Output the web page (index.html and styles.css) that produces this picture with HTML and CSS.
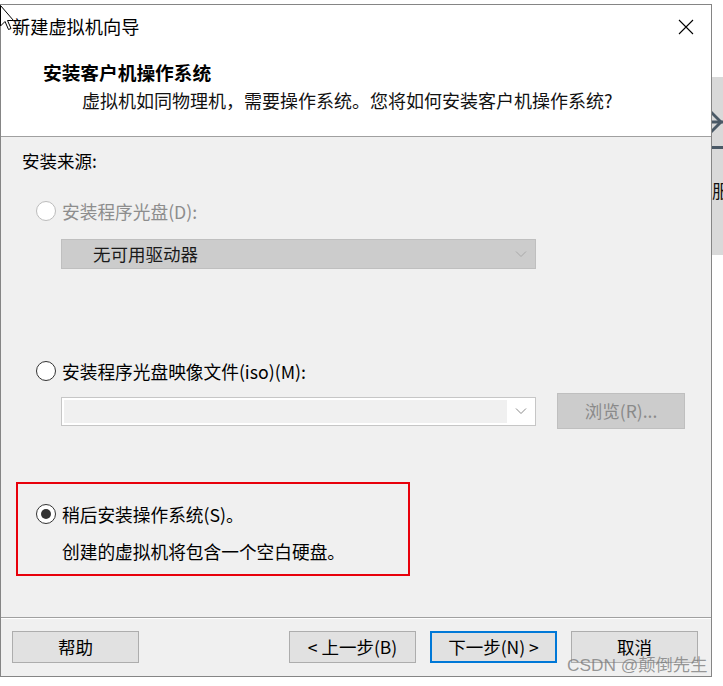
FILE: index.html
```html
<!DOCTYPE html>
<html lang="zh-CN">
<head>
<meta charset="utf-8">
<title>新建虚拟机向导</title>
<link rel="stylesheet" href="styles.css">
</head>
<body>
<div class="screen">
  <div class="window">
    <div class="titlebar">
      <span class="title">新建虚拟机向导</span>
      <svg class="close" width="16" height="16" viewBox="0 0 16 16"><path d="M1 1 L15 15 M15 1 L1 15" stroke="#000" stroke-width="1.1" fill="none"/></svg>
    </div>
    <div class="header">
      <div class="h-title">安装客户机操作系统</div>
      <div class="h-sub">虚拟机如同物理机，需要操作系统。您将如何安装客户机操作系统?</div>
    </div>
    <div class="content">
      <div class="group-label">安装来源:</div>
      <div class="radio-row disabled r1"><span class="radio"></span><span class="label">安装程序光盘(D):</span></div>
      <div class="select">
        <span class="select-text">无可用驱动器</span>
        <svg class="chev" width="12" height="8" viewBox="0 0 12 8"><path d="M1 1.5 L6 6.5 L11 1.5" stroke="#a8a8a8" stroke-width="1" fill="none"/></svg>
      </div>
      <div class="radio-row r2"><span class="radio"></span><span class="label">安装程序光盘映像文件(iso)(M):</span></div>
      <div class="iso-row">
        <div class="combo">
          <div class="combo-field"></div>
          <svg class="chev" width="12" height="8" viewBox="0 0 12 8"><path d="M1 1.5 L6 6.5 L11 1.5" stroke="#8a8a8a" stroke-width="1" fill="none"/></svg>
        </div>
        <div class="browse">浏览(R)...</div>
      </div>
      <div class="highlight">
        <div class="radio-row"><span class="radio checked"></span><span class="label">稍后安装操作系统(S)。</span></div>
        <div class="note">创建的虚拟机将包含一个空白硬盘。</div>
      </div>
    </div>
    <div class="footer">
      <div class="btn">帮助</div>
      <div class="nav">
        <div class="btn">&lt; 上一步(B)</div>
        <div class="btn default">下一步(N) &gt;</div>
        <div class="btn">取消</div>
      </div>
    </div>
  </div>
  <div class="side">
    <div class="side-panel">
      <svg class="side-arrow" width="11" height="26" viewBox="0 0 11 26"><path d="M-2 2 L9 13 L-2 24" stroke="#4a5966" stroke-width="3" fill="none"/><path d="M0 13 H11" stroke="#4a5966" stroke-width="3"/></svg>
      <div class="side-line"></div>
      <div class="side-text">服</div>
    </div>
  </div>
  <svg class="cursor" width="16" height="30" viewBox="0 0 16 30"><path d="M0.5 0.5 L0.5 21 L5 16.5 L8.5 24.5 L11 23.5 L7.5 15.5 L13.5 15.5 Z" fill="#fff" stroke="#000" stroke-width="1"/></svg>
  <div class="watermark">CSDN @颠倒先生</div>
</div>
</body>
</html>
```
FILE: styles.css
```css
html, body {
  margin: 0;
  padding: 0;
  background: #ffffff;
}
.screen {
  position: relative;
  width: 723px;
  height: 686px;
  display: flex;
  align-items: flex-start;
  overflow: hidden;
  font-family: "Noto Sans CJK SC", "Noto Sans", sans-serif;
  color: #000;
}
.window {
  margin-top: 4px;
  width: 710px;
  height: 671px;
  border: 1px solid #858585;
  display: flex;
  flex-direction: column;
  background: #fff;
}
.titlebar {
  height: 42px;
  display: flex;
  align-items: center;
  justify-content: space-between;
  padding: 0 17px 0 11px;
}
.title {
  font-size: 18.2px;
  line-height: 24px;
}
.close {
  display: block;
  margin-top: 2px;
}
.header {
  height: 90px;
  padding: 13px 0 0 42px;
  box-sizing: border-box;
  border-bottom: 1px solid #a0a0a0;
  background: #fff;
}
.h-title {
  font-size: 18.7px;
  line-height: 24px;
  font-weight: bold;
}
.h-sub {
  margin-top: 4px;
  padding-left: 39px;
  font-size: 18px;
  line-height: 24px;
  color: #111;
}
.content {
  flex: 1;
  background: #f0f0f0;
  padding-left: 15px;
  display: flex;
  flex-direction: column;
  align-items: flex-start;
}
.group-label {
  margin-top: 12px;
  margin-left: 6px;
  font-size: 17.5px;
  line-height: 24px;
}
.radio-row {
  display: flex;
  align-items: center;
  height: 24px;
  gap: 6px;
  font-size: 17.7px;
  line-height: 24px;
}
.r1 { margin-top: 26px; margin-left: 20px; }
.r2 { margin-top: 90px; margin-left: 20px; }
.radio {
  width: 18px;
  height: 18px;
  border: 1px solid #333;
  border-radius: 50%;
  background: #fff;
  position: relative;
  flex: none;
}
.disabled .radio { border-color: #bcbcbc; }
.disabled .label { color: #8d8d8d; }
.radio.checked::after {
  content: "";
  position: absolute;
  left: 4px;
  top: 4px;
  width: 10px;
  height: 10px;
  border-radius: 50%;
  background: #333;
}
.select {
  margin-top: 16px;
  margin-left: 45px;
  width: 475px;
  height: 30px;
  box-sizing: border-box;
  border: 1px solid #bfbfbf;
  background: #cccccc;
  display: flex;
  align-items: center;
  justify-content: space-between;
  padding: 0 8px 0 31px;
}
.select-text {
  font-size: 17.5px;
  line-height: 24px;
  color: #1a1a1a;
}
.iso-row {
  margin-top: 10px;
  margin-left: 45px;
  height: 36px;
  display: flex;
  align-items: center;
  gap: 21px;
}
.combo {
  width: 475px;
  height: 29px;
  box-sizing: border-box;
  border: 1px solid #c6c6c6;
  background: #fff;
  display: flex;
  align-items: center;
  padding: 2px 8px 2px 2px;
  gap: 8px;
}
.combo-field {
  flex: 1;
  height: 100%;
  background: #f0f0f0;
}
.browse {
  width: 128px;
  height: 36px;
  box-sizing: border-box;
  border: 1px solid #bfbfbf;
  background: #cccccc;
  color: #8a8a8a;
  font-size: 17.5px;
  line-height: 34px;
  text-align: center;
}
.highlight {
  margin-top: 53px;
  width: 394px;
  height: 94px;
  box-sizing: border-box;
  border: 2px solid #e8000b;
  padding: 18px 0 0 18px;
}
.note {
  margin-top: 13px;
  margin-left: 26px;
  font-size: 17.7px;
  line-height: 24px;
}
.footer {
  height: 59px;
  box-sizing: border-box;
  border-top: 1px solid #a0a0a0;
  box-shadow: inset 0 1px #ffffff;
  background: #f0f0f0;
  padding: 13px 13px 0 11px;
  display: flex;
  align-items: flex-start;
  justify-content: space-between;
}
.nav {
  display: flex;
  gap: 14px;
}
.btn {
  width: 127px;
  height: 32px;
  box-sizing: border-box;
  border: 1px solid #adadad;
  background: #e1e1e1;
  font-size: 17.5px;
  line-height: 30px;
  text-align: center;
}
.btn.default {
  border: 2px solid #0078d7;
  line-height: 28px;
}
.side {
  width: 11px;
  height: 686px;
  flex: none;
  overflow: hidden;
  background: #fff;
}
.side-panel {
  margin-top: 77px;
  height: 178px;
  background: #d9d9d9;
  display: flex;
  flex-direction: column;
}
.side-arrow {
  display: block;
  margin-top: 32px;
}
.side-line {
  margin-top: 11px;
  height: 3px;
  background: #4a5966;
}
.side-text {
  margin-top: 30px;
  font-size: 18px;
  line-height: 22px;
  white-space: nowrap;
  color: #111;
}
.cursor {
  position: absolute;
  left: 0;
  top: 5px;
}
.watermark {
  position: absolute;
  left: 567px;
  top: 654px;
  font-family: "Liberation Sans", "Noto Sans CJK SC", sans-serif;
  font-size: 17.3px;
  line-height: 22px;
  color: rgba(120, 120, 120, 0.75);
  white-space: nowrap;
}
```
